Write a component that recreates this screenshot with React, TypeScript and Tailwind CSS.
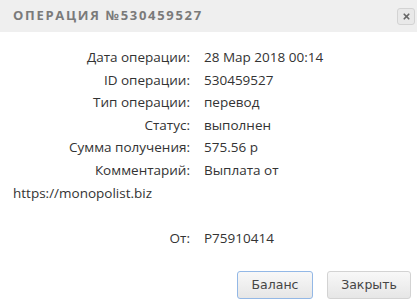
import { X } from "lucide-react";

const rows = [
  { label: "Дата операции:", value: "28 Мар 2018 00:14" },
  { label: "ID операции:", value: "530459527" },
  { label: "Тип операции:", value: "перевод" },
  { label: "Статус:", value: "выполнен" },
  { label: "Сумма получения:", value: "575.56 р" },
];

export default function App() {
  return (
    <div className="w-[417px] h-[308px] bg-white overflow-hidden font-['Open_Sans',sans-serif] text-[#333]">
      <div className="h-[32px] bg-[#efefef] flex items-center justify-between pl-[13px] pr-[2px]">
        <span className="text-[13px] font-bold tracking-[1.7px] text-[#7a7a7a]">ОПЕРАЦИЯ №530459527</span>
        <button className="w-[18px] h-[17px] rounded-[3px] border border-[#d3d3d3] bg-[#e9e9e9] flex items-center justify-center">
          <X size={9} strokeWidth={4.5} className="text-[#666]" />
        </button>
      </div>
      <div className="pt-[14px] px-[13px] text-[13.5px] leading-[22.6px]">
        {rows.map((r) => (
          <div key={r.label}>
            <span className="inline-block w-[177px] text-right">{r.label}</span>
            <span className="ml-[14px]">{r.value}</span>
          </div>
        ))}
        <div>
          <span className="inline-block w-[177px] text-right">Комментарий:</span>
          <span className="ml-[14px]">Выплата от</span>
          <br />
          https://monopolist.biz
        </div>
        <div className="h-[22.6px]" />
        <div>
          <span className="inline-block w-[177px] text-right">От:</span>
          <span className="ml-[14px]">P75910414</span>
        </div>
      </div>
      <div className="flex justify-end gap-[14px] pr-[6px] mt-[22px] font-['DejaVu_Sans',sans-serif] text-[12.5px] text-[#454545]">
        <button className="w-[76px] h-[28px] rounded-[3px] border border-[#93b8e6] bg-gradient-to-b from-[#f8f8f8] to-[#e6e6e6]">
          Баланс
        </button>
        <button className="w-[84px] h-[28px] rounded-[3px] border border-[#d3d3d3] bg-gradient-to-b from-[#f8f8f8] to-[#e6e6e6]">
          Закрыть
        </button>
      </div>
    </div>
  );
}
